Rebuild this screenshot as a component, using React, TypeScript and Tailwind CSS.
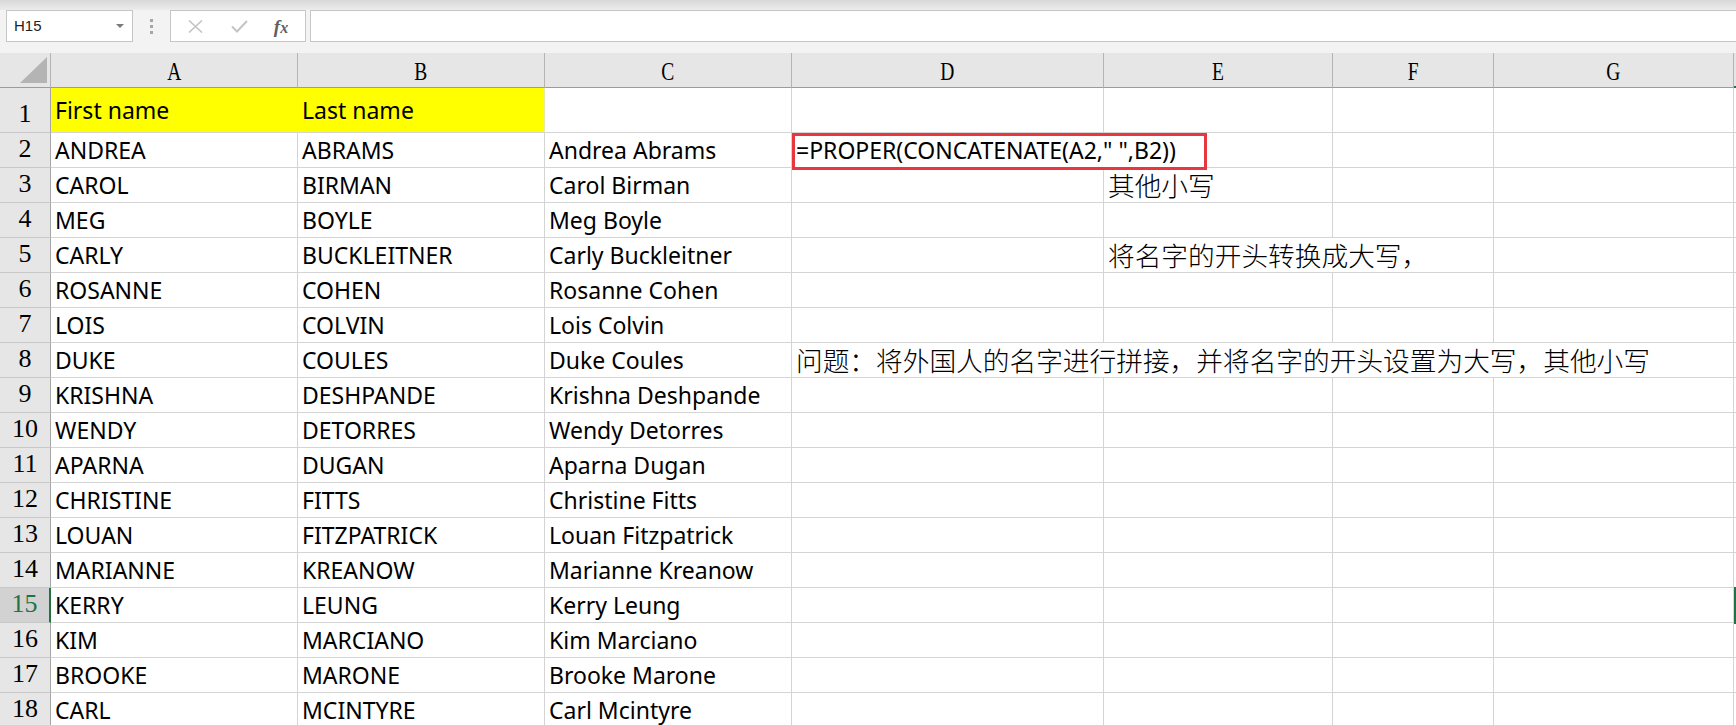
import React from "react";

const COLS = [
  "w-[247px]",
  "w-[247px]",
  "w-[247px]",
  "w-[312px]",
  "w-[229px]",
  "w-[161px]",
  "w-[240px]",
];
const LETTERS = ["A", "B", "C", "D", "E", "F", "G"];

const DATA: [string, string, string][] = [
  ["ANDREA", "ABRAMS", "Andrea Abrams"],
  ["CAROL", "BIRMAN", "Carol Birman"],
  ["MEG", "BOYLE", "Meg Boyle"],
  ["CARLY", "BUCKLEITNER", "Carly Buckleitner"],
  ["ROSANNE", "COHEN", "Rosanne Cohen"],
  ["LOIS", "COLVIN", "Lois Colvin"],
  ["DUKE", "COULES", "Duke Coules"],
  ["KRISHNA", "DESHPANDE", "Krishna Deshpande"],
  ["WENDY", "DETORRES", "Wendy Detorres"],
  ["APARNA", "DUGAN", "Aparna Dugan"],
  ["CHRISTINE", "FITTS", "Christine Fitts"],
  ["LOUAN", "FITZPATRICK", "Louan Fitzpatrick"],
  ["MARIANNE", "KREANOW", "Marianne Kreanow"],
  ["KERRY", "LEUNG", "Kerry Leung"],
  ["KIM", "MARCIANO", "Kim Marciano"],
  ["BROOKE", "MARONE", "Brooke Marone"],
  ["CARL", "MCINTYRE", "Carl Mcintyre"],
];

const LATIN = "font-['Noto_Sans',sans-serif] text-[23px]";
const CJK = "font-['Noto_Sans_CJK_SC',sans-serif] font-light text-[26.7px]";

type CellDef = {
  text?: React.ReactNode;
  cjk?: boolean;
  noRight?: boolean;
  yellow?: boolean;
  extra?: React.ReactNode;
};

function Cell({ col, def }: { col: number; def: CellDef }) {
  const border = def.noRight
    ? "border-r-0"
    : def.yellow
    ? "border-r border-r-[#e8e8a8]"
    : "border-r border-r-[#d4d4d4]";
  return (
    <div
      className={`${COLS[col]} shrink-0 relative flex items-center border-b border-b-[#d4d4d4] ${border} ${
        def.yellow ? "bg-[#ffff00]" : ""
      } pl-[4px] text-black whitespace-nowrap overflow-visible`}
    >
      {def.text !== undefined && (
        <span className={`${def.cjk ? CJK : LATIN} leading-none whitespace-nowrap`}>{def.text}</span>
      )}
      {def.extra}
    </div>
  );
}

function RowHeader({ n, selected }: { n: number; selected?: boolean }) {
  return (
    <div
      className={`w-[51px] shrink-0 flex items-end justify-center pb-[5px] border-b border-b-[#c8c8c8] ${
        selected ? "bg-[#d2d2d2] border-r-2 border-r-[#217346]" : "bg-[#e6e6e6] border-r border-r-[#a6a6a6]"
      } font-['Liberation_Serif',serif] text-[26px] leading-none ${selected ? "text-[#217346]" : "text-black"}`}
    >
      {n}
    </div>
  );
}

function SheetRow({
  n,
  cells,
  tall,
  selected,
}: {
  n: number;
  cells: CellDef[];
  tall?: boolean;
  selected?: boolean;
}) {
  return (
    <div className={`flex ${tall ? "h-[45px]" : "h-[35px]"}`}>
      <RowHeader n={n} selected={selected} />
      {cells.map((c, i) => (
        <Cell key={i} col={i} def={c} />
      ))}
      <div
        className={`flex-1 ${
          selected ? "border-l-2 border-t-2 border-b-2 border-[#217346] -mt-px h-[37px]" : "border-b border-b-[#d4d4d4]"
        }`}
      />
    </div>
  );
}

function FormulaBar() {
  return (
    <div className="h-[53px] bg-[#f3f3f3] flex flex-col">
      <div className="h-[10px] bg-gradient-to-b from-[#d8d8d8] to-[#ececec]" />
      <div className="flex items-center h-[32px] pl-[6px]">
        <div className="w-[127px] h-[32px] bg-white border border-[#c6c6c6] flex items-center justify-between pl-[7px] pr-[8px]">
          <span className="font-['Liberation_Sans',sans-serif] text-[15px] text-[#222]">H15</span>
          <svg width="8" height="5" viewBox="0 0 8 5">
            <polygon points="0,0 8,0 4,4" fill="#7a7a7a" />
          </svg>
        </div>
        <div className="w-[37px] flex flex-col items-center gap-[3px]">
          <div className="w-[3px] h-[3px] bg-[#a6a6a6]" />
          <div className="w-[3px] h-[3px] bg-[#a6a6a6]" />
          <div className="w-[3px] h-[3px] bg-[#a6a6a6]" />
        </div>
        <div className="w-[136px] h-[32px] bg-white border border-[#c6c6c6] flex items-center">
          <div className="w-[44px] flex justify-center pl-[4px]">
            <svg width="15" height="13" viewBox="0 0 15 13">
              <path d="M1 0.5 L14 12.5 M14 0.5 L1 12.5" stroke="#c4c4c4" strokeWidth="1.6" fill="none" />
            </svg>
          </div>
          <div className="w-[46px] flex justify-center pl-[2px]">
            <svg width="17" height="13" viewBox="0 0 17 13">
              <path d="M1 6.5 L6 11.5 L16 1" stroke="#c4c4c4" strokeWidth="2" fill="none" />
            </svg>
          </div>
          <div className="flex-1 flex justify-center pr-[4px]">
            <span className="font-['Liberation_Serif',serif] italic font-bold text-[19px] text-[#606060] leading-none">
              f<span className="text-[16px]">x</span>
            </span>
          </div>
        </div>
        <div className="ml-[4px] flex-1 h-[32px] bg-white border border-[#c6c6c6] border-r-0" />
      </div>
    </div>
  );
}

function ColumnHeader() {
  return (
    <div className="flex h-[35px] bg-[#e6e6e6]">
      <div className="w-[51px] shrink-0 relative border-r border-r-[#b4b4b4] border-b border-b-[#9c9c9c]">
        <svg className="absolute right-[3px] bottom-[4px]" width="27" height="26" viewBox="0 0 27 26">
          <polygon points="0,26 27,26 27,0" fill="#b4b4b4" />
        </svg>
      </div>
      {LETTERS.map((l, i) => (
        <div
          key={l}
          className={`${COLS[i]} shrink-0 flex items-center justify-center pt-[4px] border-r border-r-[#b4b4b4] border-b border-b-[#9c9c9c]`}
        >
          <span className="inline-block scale-x-75 font-['Liberation_Serif',serif] text-[26px] leading-none text-black">
            {l}
          </span>
        </div>
      ))}
      <div className="flex-1 border-b-2 border-b-[#217346]" />
    </div>
  );
}

export default function App() {
  const rows: { n: number; cells: CellDef[]; tall?: boolean }[] = [];
  rows.push({
    n: 1,
    tall: true,
    cells: [
      { text: "First name", yellow: true },
      { text: "Last name", yellow: true },
      {},
      {},
      {},
      {},
      {},
    ],
  });
  DATA.forEach((d, i) => {
    const n = i + 2;
    const cells: CellDef[] = [{ text: d[0] }, { text: d[1] }, { text: d[2] }, {}, {}, {}, {}];
    if (n === 2) {
      cells[3] = {
        text: '=PROPER(CONCATENATE(A2," ",B2))',
        noRight: true,
        extra: (
          <div className="absolute left-0 top-0 w-[415px] h-[37px] border-[3px] border-[#e8383d] z-10 pointer-events-none" />
        ),
      };
    }
    if (n === 3) cells[4] = { text: "其他小写", cjk: true };
    if (n === 5) cells[4] = { text: "将名字的开头转换成大写，", cjk: true, noRight: true };
    if (n === 8) {
      cells[3] = {
        text: "问题：将外国人的名字进行拼接，并将名字的开头设置为大写，其他小写",
        cjk: true,
        noRight: true,
      };
      cells[4] = { noRight: true };
      cells[5] = { noRight: true };
    }
    rows.push({ n, cells });
  });

  return (
    <div className="w-[1736px] h-[725px] overflow-hidden bg-white">
      <FormulaBar />
      <ColumnHeader />
      {rows.map((r) => (
        <SheetRow key={r.n} n={r.n} cells={r.cells} tall={r.tall} selected={r.n === 15} />
      ))}
    </div>
  );
}
